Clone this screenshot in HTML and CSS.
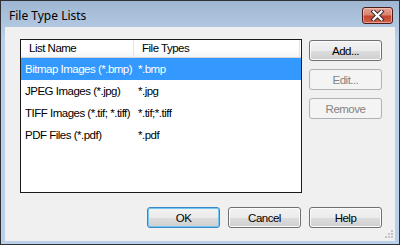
FILE: index.html
```html
<!DOCTYPE html>
<html>
<head>
<meta charset="utf-8">
<link rel="stylesheet" href="styles.css">
</head>
<body>
<div class="window">
  <div class="titlebar">
    <span class="title">File Type Lists</span>
    <div class="close">
      <svg width="17" height="11" viewBox="0 0 17 11">
        <path d="M4.5 1.5 L12.5 9.5 M12.5 1.5 L4.5 9.5" stroke="#3a2a2a" stroke-width="4.2" stroke-linecap="square" fill="none"/>
        <path d="M4.5 1.5 L12.5 9.5 M12.5 1.5 L4.5 9.5" stroke="#ffffff" stroke-width="2.2" stroke-linecap="square" fill="none"/>
      </svg>
    </div>
  </div>
  <div class="client">
    <div class="top">
      <div class="list">
        <div class="header">
          <div class="hcell c1">List Name</div>
          <div class="hcell c2">File Types</div>
        </div>
        <div class="row selected"><div class="cell c1">Bitmap Images (*.bmp)</div><div class="cell c2">*.bmp</div></div>
        <div class="row"><div class="cell c1">JPEG Images (*.jpg)</div><div class="cell c2">*.jpg</div></div>
        <div class="row"><div class="cell c1">TIFF Images (*.tif; *.tiff)</div><div class="cell c2">*.tif;*.tiff</div></div>
        <div class="row"><div class="cell c1">PDF Files (*.pdf)</div><div class="cell c2">*.pdf</div></div>
      </div>
      <div class="side">
        <div class="btn">Add...</div>
        <div class="btn disabled">Edit...</div>
        <div class="btn disabled">Remove</div>
      </div>
    </div>
    <div class="bottom">
      <div class="btn default">OK</div>
      <div class="btn">Cancel</div>
      <div class="btn">Help</div>
    </div>
    <svg class="grip" width="10" height="10" viewBox="0 0 10 10">
      <g fill="#c4c4c4">
        <rect x="7" y="1" width="2" height="2"/>
        <rect x="4" y="4" width="2" height="2"/><rect x="7" y="4" width="2" height="2"/>
        <rect x="1" y="7" width="2" height="2"/><rect x="4" y="7" width="2" height="2"/><rect x="7" y="7" width="2" height="2"/>
      </g>
    </svg>
  </div>
</div>
</body>
</html>
```
FILE: styles.css
```css
html, body {
  margin: 0;
  padding: 0;
  background: #ffffff;
}
.window {
  width: 400px;
  height: 245px;
  box-sizing: border-box;
  border: 1px solid #2e3033;
  background: linear-gradient(#9fb6d2 0px, #aec4de 20px, #bad0e9 40px, #bad0e9 100%);
  display: flex;
  flex-direction: column;
}
.titlebar {
  height: 26px;
  flex: none;
  display: flex;
  justify-content: space-between;
  align-items: flex-start;
  padding: 0 6px 0 8px;
}
.title {
  font-family: "Noto Sans", "Open Sans", sans-serif;
  font-size: 12px;
  color: #000;
  line-height: 16px;
  margin-top: 7px;
}
.close {
  margin-top: 6px;
  width: 31px;
  height: 17px;
  box-sizing: border-box;
  border: 1px solid #4b1c1c;
  border-radius: 3px;
  background: linear-gradient(#e8a393 0%, #d88470 45%, #c5442d 55%, #d0634c 100%);
  box-shadow: inset 0 0 0 1px rgba(255, 210, 200, 0.55);
  display: flex;
  align-items: center;
  justify-content: center;
}
.client {
  flex: 1;
  margin: 0 4px 3px 4px;
  background: #f0f0f0;
  padding: 12px 13px 0 15px;
  position: relative;
  font-family: "Liberation Sans", Arial, sans-serif;
  font-size: 11.5px;
  letter-spacing: -0.5px;
  color: #000;
}
.top {
  display: flex;
  gap: 7px;
}
.list {
  width: 282px;
  height: 154px;
  box-sizing: border-box;
  border: 1px solid #1b1b1b;
  background: #ffffff;
}
.header {
  display: flex;
  height: 18px;
  box-sizing: border-box;
  border-bottom: 1px solid #d5d5d5;
  background: linear-gradient(#ffffff 0%, #ffffff 50%, #f4f5f7 100%);
}
.hcell {
  box-sizing: border-box;
  padding-left: 8px;
  line-height: 17px;
  white-space: nowrap;
}
.hcell.c1 {
  width: 113px;
  border-right: 1px solid #e3e5e8;
}
.hcell.c2 {
  width: 166px;
  border-right: 1px solid #e3e5e8;
}
.row {
  display: flex;
  height: 22px;
  align-items: center;
}
.row.selected {
  background: #3399ff;
  color: #ffffff;
}
.cell {
  box-sizing: border-box;
  padding-left: 4px;
  white-space: nowrap;
}
.cell.c1 {
  width: 113px;
  flex: none;
}
.side {
  display: flex;
  flex-direction: column;
  gap: 8px;
  padding-top: 1px;
}
.bottom {
  display: flex;
  justify-content: flex-end;
  gap: 8px;
  margin-top: 14px;
}
.btn {
  width: 73px;
  height: 21px;
  box-sizing: border-box;
  border: 1px solid #707070;
  border-radius: 3px;
  background: linear-gradient(#f2f2f2 0%, #ebebeb 50%, #dddddd 50%, #cfcfcf 100%);
  box-shadow: inset 0 0 0 1px #fbfbfb;
  display: flex;
  align-items: center;
  justify-content: center;
}
.btn.default {
  border-color: #3a87c8;
  box-shadow: inset 0 0 0 1px #6fc7f2;
}
.btn.disabled {
  border-color: #adb2b5;
  background: #f4f4f4;
  box-shadow: none;
  color: #838383;
}
.grip {
  position: absolute;
  right: 1px;
  bottom: 2px;
}
```
